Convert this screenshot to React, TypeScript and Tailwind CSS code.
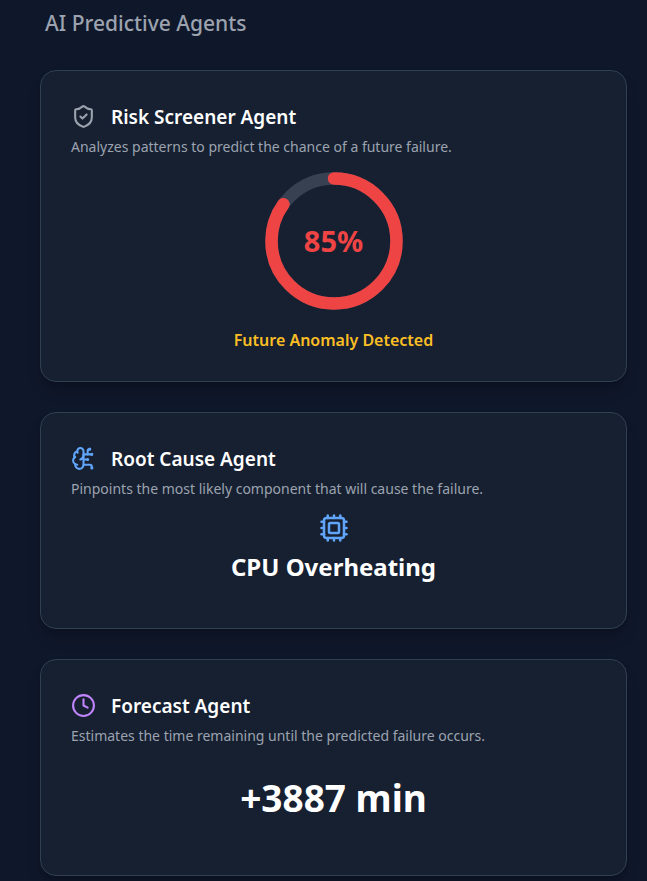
import type { ReactNode } from 'react';
import { BrainCircuit, Clock, Cpu, ShieldCheck } from 'lucide-react';

type AgentCardProps = {
  icon: ReactNode;
  title: string;
  description: string;
  children: ReactNode;
};

function AgentCard({ icon, title, description, children }: AgentCardProps) {
  return (
    <section className="rounded-2xl border border-[#304050] bg-[#162031] px-[30px] pt-[30px] pb-[30px] shadow-lg shadow-black/20">
      <div className="flex h-8 items-start gap-[15px] pt-[3px]">
        {icon}
        <h2 className="text-[19px] leading-[26px] font-semibold text-white">{title}</h2>
      </div>
      <p className="text-[14px] leading-7 text-[#9ca3af]">{description}</p>
      {children}
    </section>
  );
}

function RiskGauge({ percent }: { percent: number }) {
  return (
    <div className="grid size-[150px] place-items-center">
      <svg viewBox="0 0 120 120" className="col-start-1 row-start-1 size-full -rotate-90" aria-hidden="true">
        <circle cx="60" cy="60" r="50" fill="none" stroke="#374151" strokeWidth="10" />
        <circle
          cx="60"
          cy="60"
          r="50"
          fill="none"
          stroke="#ef4444"
          strokeWidth="10"
          strokeLinecap="round"
          pathLength="100"
          strokeDasharray={`${percent} 100`}
        />
      </svg>
      <span className="col-start-1 row-start-1 text-[29px] leading-10 font-bold text-[#ef4444]">{percent}%</span>
    </div>
  );
}

export default function App() {
  return (
    <main className="min-h-screen bg-[#0f172a] pr-5 pb-[5px] pl-10 font-['Noto_Sans','Open_Sans',sans-serif]">
      <h1 className="px-[5px] pt-2 pb-8 text-[21px] leading-[30px] font-medium text-[#9ca3af]">AI Predictive Agents</h1>
      <div className="flex flex-col gap-[30px]">
        <AgentCard
          icon={<ShieldCheck size={25} className="text-[#9ca3af]" />}
          title="Risk Screener Agent"
          description="Analyzes patterns to predict the chance of a future failure."
        >
          <div className="flex h-[190px] flex-col items-center gap-[10px] pt-[5px]">
            <RiskGauge percent={85} />
            <p className="text-[16px] leading-7 font-semibold text-[#fbbf24]">Future Anomaly Detected</p>
          </div>
        </AgentCard>
        <AgentCard
          icon={<BrainCircuit size={25} className="text-[#60a5fa]" />}
          title="Root Cause Agent"
          description="Pinpoints the most likely component that will cause the failure."
        >
          <div className="flex h-[95px] flex-col items-center gap-2 pt-[10px]">
            <Cpu size={30} className="text-[#60a5fa]" />
            <p className="text-[24px] leading-8 font-bold text-white">CPU Overheating</p>
          </div>
        </AgentCard>
        <AgentCard
          icon={<Clock size={25} className="text-[#c084fc]" />}
          title="Forecast Agent"
          description="Estimates the time remaining until the predicted failure occurs."
        >
          <div className="flex h-[95px] items-center justify-center">
            <p className="text-[37px] leading-[50px] font-bold text-white">+3887 min</p>
          </div>
        </AgentCard>
      </div>
    </main>
  );
}
